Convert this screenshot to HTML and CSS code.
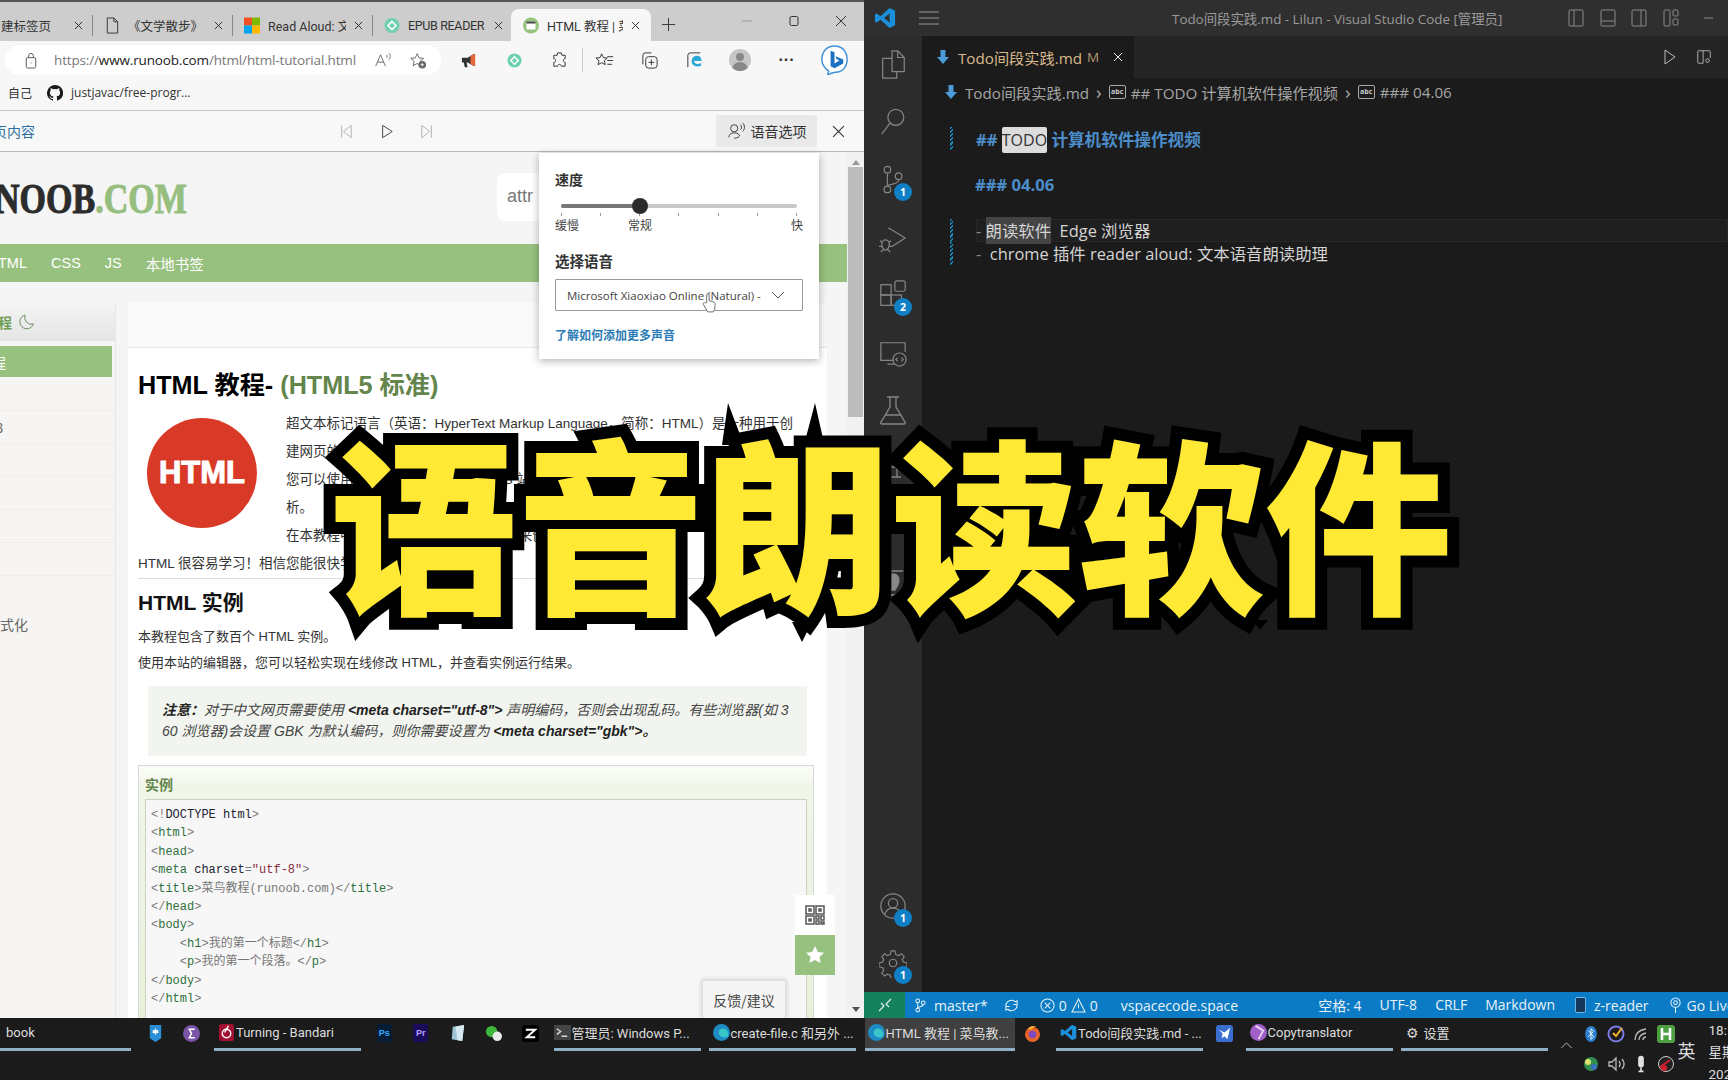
FILE: index.html
```html
<!DOCTYPE html>
<html lang="zh">
<head>
<meta charset="utf-8">
<title>语音朗读软件</title>
<link rel="stylesheet" href="styles.css">
</head>
<body>
<div class="screen">
  <div class="panes">
    <section class="browser">
      <div class="tabstrip">
        <div class="tab tab-first"><span class="tab-label">建标签页</span><svg class="x" viewBox="0 0 10 10"><path d="M1 1l8 8M9 1l-8 8"/></svg></div>
        <div class="tab"><svg class="fav" viewBox="0 0 16 18"><path d="M3 1h7l4 4v12H3zM10 1v4h4" fill="none" stroke="#333"/></svg><span class="tab-label">《文学散步》</span><svg class="x" viewBox="0 0 10 10"><path d="M1 1l8 8M9 1l-8 8"/></svg></div>
        <div class="tab"><svg class="fav" viewBox="0 0 16 16"><rect width="8" height="8" fill="#f25022"/><rect x="8" width="8" height="8" fill="#7fba00"/><rect y="8" width="8" height="8" fill="#00a4ef"/><rect x="8" y="8" width="8" height="8" fill="#ffb900"/></svg><span class="tab-label">Read Aloud: 文</span><svg class="x" viewBox="0 0 10 10"><path d="M1 1l8 8M9 1l-8 8"/></svg></div>
        <div class="tab"><svg class="fav" viewBox="0 0 16 16"><circle cx="8" cy="8" r="7.5" fill="#6dd0b0"/><path d="M8 4l4 4-4 4-4-4z" fill="none" stroke="#fff" stroke-width="1.6"/></svg><span class="tab-label tab-tight">EPUB READER</span><svg class="x" viewBox="0 0 10 10"><path d="M1 1l8 8M9 1l-8 8"/></svg></div>
        <div class="tab tab-active"><svg class="fav" viewBox="0 0 16 16"><circle cx="8" cy="8" r="8" fill="#96c47e"/><rect x="3.5" y="4" width="9" height="8" rx="1" fill="#fff"/><rect x="3.5" y="4" width="9" height="2" fill="#444"/></svg><span class="tab-label">HTML 教程 | 菜</span><svg class="x" viewBox="0 0 10 10"><path d="M1 1l8 8M9 1l-8 8"/></svg></div>
        <svg class="newtab" viewBox="0 0 16 16"><path d="M8 1v14M1 8h14"/></svg>
        <div class="winctl">
          <svg viewBox="0 0 12 12"><path d="M1 6h10" stroke="#999"/></svg>
          <svg viewBox="0 0 12 12"><rect x="2" y="1.5" width="8" height="9" rx="1.5"/></svg>
          <svg viewBox="0 0 12 12"><path d="M1 1l10 10M11 1L1 11"/></svg>
        </div>
      </div>
      <div class="toolbar">
        <div class="urlbar">
          <svg class="lock" viewBox="0 0 14 18"><rect x="2" y="6" width="10" height="11" rx="1.5"/><path d="M4.5 6V4a2.5 2.5 0 015 0v2M7 11v1"/></svg>
          <span class="url"><span class="url-dim">https://</span>www.runoob.com<span class="url-dim">/html/html-tutorial.html</span></span>
          <svg class="url-ico" viewBox="0 0 22 20"><path d="M2 17L8 3l6 14M4 12h8M15 3c1.500 1 1.500 3 0 4M18 1c2.500 2 2.500 6 0 8"/></svg>
          <svg class="url-ico star" viewBox="0 0 20 20"><path d="M9 2l2.200 5 5.300.5-4 3.500 1.200 5.300L9 13.500 4.300 16.300 5.500 11l-4-3.500 5.300-.5z"/><circle cx="15" cy="15" r="4.500" fill="#666" stroke="none"/><path d="M15 13v4M13 15h4" stroke="#fff"/></svg>
        </div>
        <div class="tools">
          <span class="tool"><svg viewBox="0 0 20 20"><path d="M2 7h6l7-4v13l-7-4H7l1 5H5L4 12H2z" fill="#333" stroke="none"/><path d="M11 5l5-2v13l-5-2z" fill="#e2683c" stroke="none"/></svg></span>
          <span class="tool tool-small"><svg viewBox="0 0 16 16"><circle cx="8" cy="8" r="7.500" fill="#6dd0b0" stroke="none"/><path d="M8 4l4 4-4 4-4-4z" stroke="#fff" stroke-width="1.600"/></svg></span>
          <span class="tool"><svg viewBox="0 0 18 20"><path d="M7 2h4l.5 2.500H15V8c-2.500 0-2.500 4 0 4v4h-4c0-2.500-4-2.500-4 0H3v-4C5.500 12 5.500 8 3 8V4.500h3.500z"/></svg></span>
          <span class="sep"></span>
          <span class="tool"><svg viewBox="0 0 20 20"><path d="M7 3l1.800 4 4.200.4-3.200 2.800 1 4.200L7 12.300 3.200 14.400l1-4.200L1 7.400l4.200-.4zM13 6h6M13 10h6M13 14h5"/></svg></span>
          <span class="tool"><svg viewBox="0 0 20 20"><rect x="6" y="6" width="12" height="12" rx="3"/><path d="M3 14V4.500A2.500 2.500 0 015.500 2H12M12 9v6M9 12h6"/></svg></span>
          <span class="tool"><svg viewBox="0 0 20 20"><path d="M3 17V4.500A2.500 2.500 0 015.500 2H16"/><path d="M7 11c0-4 2.500-6 5.500-6s5 2 5 5.500H9.500c.5 3.500 4.500 4 7.500 2v3c-4 2-10 .5-10-4.500z" fill="#2fa8d6" stroke="none"/></svg></span>
          <span class="tool"><span class="avatar"><span class="avatar-head"></span><span class="avatar-body"></span></span></span>
          <span class="tool tool-dots">···</span>
          <span class="tool tool-bing"><svg class="bing" viewBox="0 0 30 34"><path d="M15 2c8 0 13 6 13 14s-5 13-12 13c-3 0-5 1-8 3l1-4C5 25 2 21 2 16 2 8 7 2 15 2z" fill="#fff" stroke="#3f8fd6" stroke-width="1.500"/><path d="M11 7l4 1.500V20l5-3-3-1.500-1-3 8 3.500v4l-9 5-4-2z" fill="#1b72c4" stroke="none"/></svg></span>
        </div>
      </div>
      <div class="favbar">
        <span class="fav-folder">自己</span>
        <svg class="gh" viewBox="0 0 16 16"><path d="M8 0a8 8 0 00-2.530 15.590c.4.070.55-.17.55-.38v-1.340c-2.230.49-2.700-1.070-2.700-1.070-.36-.93-.89-1.170-.89-1.170-.73-.5.050-.49.050-.49.800.060 1.230.830 1.230.830.710 1.220 1.870.870 2.330.660.070-.520.280-.870.500-1.070-1.780-.200-3.640-.890-3.640-3.950 0-.870.310-1.590.820-2.150-.080-.200-.360-1.020.080-2.120 0 0 .670-.210 2.200.820a7.600 7.600 0 014 0c1.530-1.040 2.200-.820 2.200-.820.440 1.100.160 1.920.080 2.120.510.560.820 1.270.820 2.150 0 3.070-1.870 3.750-3.650 3.950.290.250.540.730.540 1.480v2.200c0 .210.150.460.550.380A8 8 0 008 0z"/></svg>
        <span class="fav-link">justjavac/free-progr...</span>
      </div>
      <div class="readbar">
        <span class="read-title">页内容</span>
        <div class="read-controls">
          <svg viewBox="0 0 16 18"><path d="M3 2v14M14 2L5 9l9 7z"/></svg>
          <svg class="play" viewBox="0 0 16 18"><path d="M3 2l11 7-11 7z"/></svg>
          <svg viewBox="0 0 16 18"><path d="M13 2v14M2 2l9 7-9 7z"/></svg>
        </div>
        <div class="voice-btn">
          <svg viewBox="0 0 20 20"><circle cx="8" cy="7" r="4"/><path d="M2 17c0-3 2.500-5 6-5s6 2 6 3-2 3-6 3M15 3c1.500 1.500 1.500 4 0 5.500M17.500 1c2.500 2.500 2.500 7 0 9.500"/></svg>
          语音选项
        </div>
        <svg class="read-close" viewBox="0 0 12 12"><path d="M1 1l10 10M11 1L1 11"/></svg>
      </div>
      <div class="viewport">
        <div class="page">
          <header class="site-head">
            <span class="logo">NOOB<span class="logo-green">.COM</span></span>
            <div class="search">attr</div>
          </header>
          <nav class="site-nav">
            <span class="nav-clip">TML</span><span>CSS</span><span>JS</span><span>本地书签</span>
          </nav>
          <div class="site-body">
            <aside class="side">
              <div class="side-head"><span>程</span><svg viewBox="0 0 16 16"><path d="M6 1a7 7 0 108.500 9A7 7 0 016 1z"/></svg></div>
              <div class="side-active">程</div>
              <div class="side-item"></div>
              <div class="side-item">3</div>
              <div class="side-item"></div>
              <div class="side-item"></div>
              <div class="side-item"></div>
              <div class="side-item"></div>
              <div class="side-item side-clip">式化</div>
            </aside>
            <article class="article">
              <div class="article-band"></div>
              <div class="article-main">
                <h1 class="doc-title">HTML 教程- <span class="doc-green">(HTML5 标准)</span></h1>
                <div class="intro">
                  <div class="html-logo">HTML</div>
                  <div class="intro-text">
                    <p>超文本标记语言（英语：HyperText Markup Language，简称：HTML）是一种用于创</p>
                    <p>建网页的标准标记语言。</p>
                    <p>您可以使用 HTML 来建立自己的 WEB 站点，HTML 运行在浏览器上，由浏览器来解</p>
                    <p>析。</p>
                    <p>在本教程中，您将学习如何使用 HTML 来创建站点。</p>
                  </div>
                </div>
                <p class="easy">HTML 很容易学习！相信您能很快学会它！</p>
                <h2 class="doc-sub">HTML 实例</h2>
                <p class="body-line">本教程包含了数百个 HTML 实例。</p>
                <p class="body-line">使用本站的编辑器，您可以轻松实现在线修改 HTML，并查看实例运行结果。</p>
                <div class="note">
                  <b>注意：</b>对于中文网页需要使用 <b>&lt;meta charset="utf-8"&gt;</b> 声明编码，否则会出现乱码。有些浏览器(如 3<br>
                  60 浏览器)会设置 GBK 为默认编码，则你需要设置为 <b>&lt;meta charset="gbk"&gt;。</b>
                </div>
                <div class="example">
                  <h3 class="ex-title">实例</h3>
                  <pre class="code"><span class="c-p">&lt;!</span><span class="c-d">DOCTYPE html</span><span class="c-p">&gt;</span>
<span class="c-p">&lt;</span><span class="c-t">html</span><span class="c-p">&gt;</span>
<span class="c-p">&lt;</span><span class="c-t">head</span><span class="c-p">&gt;</span>
<span class="c-p">&lt;</span><span class="c-t">meta</span> <span class="c-d">charset</span><span class="c-p">=</span><span class="c-s">"utf-8"</span><span class="c-p">&gt;</span>
<span class="c-p">&lt;</span><span class="c-t">title</span><span class="c-p">&gt;</span><span class="c-x">菜鸟教程(runoob.com)</span><span class="c-p">&lt;/</span><span class="c-t">title</span><span class="c-p">&gt;</span>
<span class="c-p">&lt;/</span><span class="c-t">head</span><span class="c-p">&gt;</span>
<span class="c-p">&lt;</span><span class="c-t">body</span><span class="c-p">&gt;</span>
    <span class="c-p">&lt;</span><span class="c-t">h1</span><span class="c-p">&gt;</span><span class="c-x">我的第一个标题</span><span class="c-p">&lt;/</span><span class="c-t">h1</span><span class="c-p">&gt;</span>
    <span class="c-p">&lt;</span><span class="c-t">p</span><span class="c-p">&gt;</span><span class="c-x">我的第一个段落。</span><span class="c-p">&lt;/</span><span class="c-t">p</span><span class="c-p">&gt;</span>
<span class="c-p">&lt;/</span><span class="c-t">body</span><span class="c-p">&gt;</span>
<span class="c-p">&lt;/</span><span class="c-t">html</span><span class="c-p">&gt;</span></pre>
                </div>
              </div>
            </article>
          </div>
        </div>
        <div class="scrollbar">
          <span class="sb-up"></span>
          <span class="sb-thumb"></span>
          <span class="sb-down"></span>
        </div>
        <div class="voice-pop">
          <div class="vp-label">速度</div>
          <div class="slider"><span class="slider-fill"></span><span class="slider-thumb"></span></div>
          <div class="ticks"><i></i><i></i><i></i><i></i><i></i><i></i><i></i></div>
          <div class="speed-labels"><span>缓慢</span><span class="sl-mid">常规</span><span class="sl-end">快</span></div>
          <div class="vp-label vp-voice">选择语音</div>
          <div class="vp-select"><span>Microsoft Xiaoxiao Online (Natural) -</span><svg viewBox="0 0 14 8"><path d="M1 1l6 6 6-6"/></svg></div>
          <div class="vp-link">了解如何添加更多声音</div>
          <svg class="hand" viewBox="0 0 16 22"><path d="M5 11V3a1.300 1.300 0 012.600 0v6l5 1.500c1.500.5 1.500 2 1.400 3l-.5 5-1.500 2.500H6L1.500 13c-.8-1.500 1-2.500 2-1.500z"/></svg>
        </div>
        <div class="side-tools">
          <div class="st-qr"><svg viewBox="0 0 20 20"><path d="M1 1h8v8H1zM11 1h8v8h-8zM1 11h8v8H1zM4 4h2v2H4zM14 4h2v2h-2zM4 14h2v2H4zM11 11h3v3h-3zM16 11h3v4h-3zM11 16h3v3h-3zM16 17h3v2h-3z"/></svg></div>
          <div class="st-star"><svg viewBox="0 0 20 20"><path d="M10 1l2.800 6 6.200.7-4.600 4.200 1.300 6.100L10 15l-5.700 3 1.300-6.100L1 7.700 7.200 7z"/></svg></div>
        </div>
        <div class="feedback">反馈/建议</div>
      </div>
    </section>

    <section class="vscode">
      <div class="vs-title">
        <svg class="vs-logo" viewBox="0 0 24 24"><path d="M17 1l6 3v16l-6 3L7 14l-4 3-2-1V8l2-1 4 3zM17 7l-6 5 6 5z" fill="#1b8fd9"/></svg>
        <svg class="vs-burger" viewBox="0 0 20 14"><path d="M0 1h20M0 7h20M0 13h20"/></svg>
        <span class="vs-titletext">Todo间段实践.md - Lilun - Visual Studio Code [管理员]</span>
        <div class="vs-layout">
          <svg viewBox="0 0 16 18"><rect x="1" y="1" width="14" height="16" rx="1"/><path d="M6 1v16"/></svg>
          <svg viewBox="0 0 16 18"><rect x="1" y="1" width="14" height="16" rx="1"/><path d="M1 12h14"/></svg>
          <svg viewBox="0 0 16 18"><rect x="1" y="1" width="14" height="16" rx="1"/><path d="M10 1v16"/></svg>
          <svg viewBox="0 0 16 18"><rect x="1" y="1" width="6" height="16" rx="1"/><rect x="10" y="1" width="5" height="6" rx="1"/><rect x="10" y="10" width="5" height="6" rx="1"/></svg>
          <svg class="vs-min" viewBox="0 0 16 18"><path d="M3 9h9"/></svg>
        </div>
      </div>
      <div class="vs-middle">
        <aside class="activity">
          <div class="act-group">
            <span class="act"><svg viewBox="0 0 28 32"><path d="M13 1h6l7 7v15H13zM19 1v7h7M13 9H3v21h15v-7"/></svg></span>
            <span class="act"><svg viewBox="0 0 28 32"><circle cx="17" cy="11" r="8.500"/><path d="M11 17L2 29"/></svg></span>
            <span class="act"><svg viewBox="0 0 28 32"><circle cx="8" cy="5" r="3.500"/><circle cx="8" cy="26" r="3.500"/><circle cx="20" cy="12" r="3.500"/><path d="M8 9v13M20 16c0 5-10 4-12 6"/></svg><b class="badge">1</b></span>
            <span class="act"><svg viewBox="0 0 30 32"><path d="M10 5l18 11-14 9M3 23c0-3 2-5 4-5s4 2 4 5-2 6-4 6-4-3-4-6zM1 19l3 2M13 19l-3 2M0 25h3M11 25h3M2 31l3-3M12 31l-3-3"/></svg></span>
            <span class="act"><svg viewBox="0 0 28 32"><rect x="1" y="5" width="11" height="11"/><rect x="1" y="16" width="11" height="11"/><rect x="12" y="16" width="11" height="11"/><rect x="16" y="1" width="11" height="11" rx="2"/></svg><b class="badge">2</b></span>
            <span class="act"><svg viewBox="0 0 30 30"><path d="M16 23H2V4h26v10M9 27h8"/><circle cx="22" cy="22" r="7"/><path d="M20 20l-2 2 2 2M24 20l2 2-2 2"/></svg></span>
            <span class="act"><svg viewBox="0 0 28 30"><path d="M8 2h12M11 2v10L2 27c-1 1 0 2 1 2h22c1 0 2-1 1-2l-9-15V2M6 20h16"/></svg></span>
            <span class="act"><svg viewBox="0 0 28 30"><path d="M6 3l8 8 8-8M3 14h22M10 14v10M18 14v10M6 24h16"/></svg></span>
            <span class="act"></span>
            <span class="act"><svg viewBox="0 0 28 30"><path d="M4 3h20M4 27h20" /><path d="M14 6c4 0 6 3 6 7s-3 7-4 9h-4c-1-2-4-5-4-9s2-7 6-7z" fill="#888"/></svg></span>
          </div>
          <div class="act-group">
            <span class="act"><svg viewBox="0 0 30 30"><circle cx="15" cy="15" r="13"/><circle cx="15" cy="12" r="5"/><path d="M6 24c2-5 5-7 9-7s7 2 9 7"/></svg><b class="badge">1</b></span>
            <span class="act"><svg viewBox="0 0 30 30"><path d="M13 2h4l1 4 3 1 3-2 3 3-2 3 1 3 4 1v4l-4 1-1 3 2 3-3 3-3-2-3 1-1 4h-4l-1-4-3-1-3 2-3-3 2-3-1-3-4-1v-4l4-1 1-3-2-3 3-3 3 2 3-1z"/><circle cx="15" cy="15" r="4"/></svg><b class="badge">1</b></span>
          </div>
        </aside>
        <div class="editor">
          <div class="ed-tabs">
            <div class="ed-tab">
              <svg class="md-arrow" viewBox="0 0 12 16"><path d="M3.500 1h5v7H12l-6 7-6-7h3.500z"/></svg>
              <span class="ed-tabname">Todo间段实践.md</span><span class="ed-m">M</span>
              <svg class="ed-x" viewBox="0 0 10 10"><path d="M1 1l8 8M9 1l-8 8"/></svg>
            </div>
            <div class="ed-actions">
              <svg viewBox="0 0 14 18"><path d="M2 2l10 7-10 7z"/></svg>
              <svg viewBox="0 0 18 18"><path d="M8 16H3a1 1 0 01-1-1V3a1 1 0 011-1h12a1 1 0 011 1v7M8 2v14"/><circle cx="13" cy="13" r="2"/></svg>
            </div>
          </div>
          <div class="crumbs">
            <svg class="md-arrow" viewBox="0 0 12 16"><path d="M3.500 1h5v7H12l-6 7-6-7h3.500z"/></svg>
            <span>Todo间段实践.md</span><i>›</i>
            <em class="abc">abc</em><span>## TODO 计算机软件操作视频</span><i>›</i>
            <em class="abc">abc</em><span>### 04.06</span>
          </div>
          <div class="lines">
            <div class="line"><span class="git"></span><span class="h"><b>##</b> <mark class="word">TODO</mark> <b>计算机软件操作视频</b></span></div>
            <div class="line"><span class="nogit"></span></div>
            <div class="line"><span class="nogit"></span><span class="h"><b>### 04.06</b></span></div>
            <div class="line"><span class="nogit"></span></div>
            <div class="line line-cur"><span class="git"></span><span class="cur"><span class="dash">-</span> <mark class="sel">朗读软件</mark>  Edge 浏览器</span></div>
            <div class="line"><span class="git"></span><span class="cur"><span class="dash">-</span>  chrome 插件 reader aloud: 文本语音朗读助理</span></div>
          </div>
        </div>
      </div>
      <div class="status">
        <span class="st-remote"><svg viewBox="0 0 14 14"><path d="M1 13l5-5-3-3M13 1L8 6l3 3"/></svg></span>
        <span class="st-item st-branch"><svg viewBox="0 0 12 16"><circle cx="3" cy="3" r="2"/><circle cx="3" cy="13" r="2"/><circle cx="9" cy="5" r="2"/><path d="M3 5v6M9 7c0 3-6 2-6 4"/></svg>master*</span>
        <span class="st-item st-sync"><svg viewBox="0 0 16 16"><path d="M2 9a6 6 0 0110-5l2-1v4h-4M14 7a6 6 0 01-10 5l-2 1V9h4"/></svg></span>
        <span class="st-item st-err"><svg viewBox="0 0 16 16"><circle cx="8" cy="8" r="7"/><path d="M5 5l6 6M11 5l-6 6"/></svg>0<svg viewBox="0 0 16 16"><path d="M8 1l7 14H1z"/><path d="M8 6v5"/></svg>0</span>
        <span class="st-item st-live">vspacecode.space</span>
        <span class="st-right">
          <span>空格: 4</span><span>UTF-8</span><span>CRLF</span><span>Markdown</span>
          <span class="st-reader"><i class="phone"></i>z-reader</span>
          <span class="st-golive"><svg viewBox="0 0 14 18"><circle cx="7" cy="6" r="5"/><circle cx="7" cy="6" r="2"/><path d="M7 11v6"/></svg>Go Live</span>
        </span>
      </div>
    </section>
  </div>

  <footer class="taskbar">
    <div class="tb-app tb-book"><span class="tb-text">book</span></div>
    <span class="tb-icon tb-first"><svg viewBox="0 0 16 20"><path d="M2 1h12v14l-6 4-6-4z" fill="#2b8fd8"/><path d="M8 5v6M5 7l6 2M11 7L5 9" stroke="#fff" stroke-width="1.500"/></svg></span>
    <span class="tb-icon"><svg viewBox="0 0 16 16"><circle cx="8" cy="8" r="8" fill="#7a54a8"/><path d="M11 4H6l2 4-2 4h5" fill="none" stroke="#fff" stroke-width="1.500"/></svg></span>
    <div class="tb-app tb-turning"><svg class="tb-ico" viewBox="0 0 16 18"><rect width="16" height="18" rx="3" fill="#a01030"/><circle cx="8" cy="10" r="4.500" fill="none" stroke="#fff" stroke-width="1.500"/><path d="M10 2L6 9" stroke="#fff" stroke-width="1.500"/></svg><span class="tb-text">Turning - Bandari</span></div>
    <span class="tb-icon tb-ps"><span class="ps">Ps</span></span>
    <span class="tb-icon"><span class="pr">Pr</span></span>
    <span class="tb-icon"><svg viewBox="0 0 16 20"><path d="M3 3l12-2-2 17-11-2z" fill="#9fc4d8"/><path d="M6 3l9-2-2 17-5-1z" fill="#d7e8f0"/></svg></span>
    <span class="tb-icon"><svg viewBox="0 0 18 18"><circle cx="7" cy="7" r="6" fill="#3db83a"/><circle cx="13" cy="12" r="5" fill="#eaeaea"/></svg></span>
    <span class="tb-icon"><svg viewBox="0 0 18 18"><rect width="18" height="18" rx="3" fill="#000"/><path d="M4 5h10L5 13h9" fill="none" stroke="#fff" stroke-width="2"/></svg></span>
    <div class="tb-app tb-ps-win"><svg class="tb-ico" viewBox="0 0 18 16"><rect width="18" height="16" fill="#444"/><path d="M3 4l4 3-4 3M8 12h6" fill="none" stroke="#cfd8e0" stroke-width="1.500"/></svg><span class="tb-text">管理员: Windows P...</span></div>
    <div class="tb-app tb-gap"><svg class="tb-ico" viewBox="0 0 18 18"><circle cx="9" cy="9" r="9" fill="#1f8bc4"/><path d="M6 9c0-3 3-5 6-4 3 1 5 4 4 8-3 2-9 2-10-4z" fill="#38c6c9"/></svg><span class="tb-text">create-file.c 和另外 ...</span></div>
    <div class="tb-app tb-active tb-html"><svg class="tb-ico" viewBox="0 0 18 18"><circle cx="9" cy="9" r="9" fill="#1f8bc4"/><path d="M6 9c0-3 3-5 6-4 3 1 5 4 4 8-3 2-9 2-10-4z" fill="#38c6c9"/></svg><span class="tb-text">HTML 教程 | 菜鸟教...</span></div>
    <span class="tb-icon tb-ff"><svg viewBox="0 0 18 18"><circle cx="9" cy="10" r="8" fill="#e8632a"/><circle cx="9" cy="10" r="4" fill="#7a4cc0"/><path d="M4 4c2-3 6-4 9-2-3 0-5 2-5 3z" fill="#f8b23a"/></svg></span>
    <div class="tb-app tb-todo"><svg class="tb-ico" viewBox="0 0 24 24"><path d="M17 1l6 3v16l-6 3L7 14l-4 3-2-1V8l2-1 4 3zM17 7l-6 5 6 5z" fill="#1b8fd9"/></svg><span class="tb-text">Todo间段实践.md - ...</span></div>
    <span class="tb-icon tb-kite"><svg viewBox="0 0 18 18"><rect width="18" height="18" rx="3" fill="#3a6fd0"/><path d="M3 5l6 3 6-5-3 12-3-3-3 2 1-5z" fill="#fff"/></svg></span>
    <div class="tb-app tb-copy"><svg class="tb-ico" viewBox="0 0 18 18"><circle cx="9" cy="9" r="9" fill="#a060c8"/><path d="M6 2l8 5-5 9" fill="none" stroke="#e8d4f4" stroke-width="2"/></svg><span class="tb-text">Copytranslator</span></div>
    <div class="tb-app tb-set"><span class="tb-gear">⚙</span><span class="tb-text">设置</span></div>
    <svg class="tb-chev" viewBox="0 0 14 8"><path d="M1 7l6-6 6 6"/></svg>
    <div class="tray">
      <svg viewBox="0 0 16 20"><ellipse cx="8" cy="10" rx="6.500" ry="9" fill="#2a7fd0"/><path d="M5 6l6 7-3 3V4l3 3-6 6" fill="none" stroke="#fff"/></svg>
      <svg viewBox="0 0 18 18"><circle cx="9" cy="9" r="7.500" fill="none" stroke="#7a7ae0" stroke-width="2"/><path d="M6 8l3 3 6-8" fill="none" stroke="#f0b030" stroke-width="2"/></svg>
      <svg viewBox="0 0 18 18"><path d="M3 15c0-6 4-10 11-11M7 15c0-4 2-6 7-7M11 15c0-2 1-3 3-3" fill="none" stroke="#bbb" stroke-width="1.300"/></svg>
      <svg viewBox="0 0 18 18"><rect width="18" height="18" rx="3" fill="#4da040"/><path d="M5 3v12M13 3v12M5 9h8" stroke="#fff" stroke-width="2.500"/></svg>
      <svg viewBox="0 0 18 18"><circle cx="9" cy="9" r="7" fill="#2f8f4f"/><circle cx="6" cy="7" r="3" fill="#e0e070"/><circle cx="12" cy="12" r="3" fill="#3a70c0"/></svg>
      <svg viewBox="0 0 18 18"><path d="M2 7h3l4-4v12l-4-4H2zM12 6c1.500 2 1.500 4 0 6M15 4c2.500 3 2.500 7 0 10" fill="none" stroke="#bbb" stroke-width="1.300"/></svg>
      <svg viewBox="0 0 18 22"><rect x="5.500" y="1" width="7" height="14" rx="3.500" fill="#e0e0e0"/><path d="M9 15v5M6 20h6" stroke="#e0e0e0" stroke-width="2"/></svg>
      <svg viewBox="0 0 18 18"><circle cx="9" cy="9" r="7.500" fill="#222" stroke="#ccc"/><path d="M3 12l10-7" stroke="#d02030" stroke-width="2"/><circle cx="7" cy="13" r="3" fill="#d02030"/></svg>
    </div>
    <span class="tb-lang">英</span>
    <div class="tb-clock"><span>18:</span><span>星期</span><span>2023</span></div>
  </footer>

  <div class="headline-wrap">
    <svg class="spikes" viewBox="0 0 1728 1080"><path d="M722 445L728 403 744 445zM804 445L815 403 826 452zM792 622L802 642 812 622zM1252 620L1260 630 1268 620z"/></svg>
    <h1 class="headline">语音朗读软件</h1>
  </div>
</div>
</body>
</html>
```

FILE: styles.css
```css
* { box-sizing: border-box; }
html, body { margin: 0; padding: 0; height: 100%; background: #1b1b1b; overflow: hidden; }
body { font-family: "Liberation Sans", "Noto Sans CJK SC", sans-serif; }
svg { display: block; }
p, h1, h2, h3 { margin: 0; }

.screen { position: relative; width: 1728px; height: 1080px; overflow: hidden; display: flex; flex-direction: column; }
.panes { display: flex; height: 1018px; flex: none; }

/* ---------- browser ---------- */
.browser { width: 864px; flex: none; display: flex; flex-direction: column; background: #f7f7f7; position: relative; overflow: hidden; }

.tabstrip { height: 41px; flex: none; background: #cdcdcd; border-top: 2px solid #555; display: flex; align-items: flex-end; font: 12.500px Roboto, "Noto Sans CJK SC", sans-serif; color: #333; }
.tab { width: 140px; height: 32px; flex: none; display: flex; align-items: center; padding: 0 9px; gap: 8px; position: relative; }
.tab + .tab::before { content: ""; position: absolute; left: 0; top: 6px; bottom: 5px; width: 1px; background: #888; }
.tab-first { width: 92px; padding-left: 1px; }
.tab-label { flex: 1; overflow: hidden; white-space: nowrap; min-width: 0; }
.tab-tight { letter-spacing: -.35px; }
.tab .fav { width: 16px; height: 17px; flex: none; margin-left: 3px; }
.tab .x { width: 9px; height: 9px; flex: none; fill: none; stroke: #222; stroke-width: 1; }
.tab-active { background: #f7f7f7; border-radius: 8px 8px 0 0; margin-left: -1px; }
.tab-active::before { display: none; }
.tab-active .x { margin-right: 2px; }
.newtab { width: 15px; height: 15px; margin: 0 0 9px 10px; fill: none; stroke: #333; stroke-width: 1; flex: none; }
.winctl { margin-left: auto; display: flex; gap: 35px; padding: 0 17px 14px 0; align-self: flex-end; }
.winctl svg { width: 12px; height: 12px; fill: none; stroke: #333; stroke-width: 1; }

.toolbar { height: 34px; flex: none; display: flex; align-items: center; padding: 4px 0 0 5px; background: #f7f7f7; }
.urlbar { width: 436px; height: 30px; flex: none; background: #fff; border-radius: 15px; display: flex; align-items: center; padding-left: 19px; font: 13.500px "Open Sans", sans-serif; color: #222; }
.lock { width: 14px; height: 17px; fill: none; stroke: #555; stroke-width: 1; flex: none; margin-right: 16px; }
.url { white-space: nowrap; width: 310px; overflow: hidden; letter-spacing: -.15px; }
.url-dim { color: #777; }
.url-ico { width: 18px; height: 17px; margin-left: 10px; fill: none; stroke: #555; stroke-width: 1; flex: none; }
.url-ico.star { margin-left: 17px; }
.tools { display: flex; align-items: center; margin-left: 6px; }
.tool { width: 45px; height: 32px; flex: none; display: flex; align-items: center; justify-content: center; }
.tool svg { width: 19px; height: 19px; fill: none; stroke: #333; stroke-width: 1; }
.tool-small svg { width: 15px; height: 15px; }
.tool svg.bing { width: 31px; height: 33px; }
.tool-bing { margin-left: 3px; }
.tool-dots { font-size: 16px; font-weight: bold; letter-spacing: 0; color: #333; margin-left: 2px; }
.sep { width: 1px; height: 24px; background: #ccc; margin: 0 -.5px; flex: none; }
.avatar { width: 22px; height: 22px; border-radius: 50%; background: #c5c5c5; position: relative; overflow: hidden; display: block; }
.avatar-head { position: absolute; left: 7px; top: 4px; width: 8px; height: 8px; border-radius: 50%; background: #888; }
.avatar-body { position: absolute; left: 3px; top: 13px; width: 16px; height: 10px; border-radius: 8px 8px 0 0; background: #888; }

.favbar { height: 36px; flex: none; display: flex; align-items: center; padding-left: 8px; border-bottom: 1px solid #c9c9c9; font: 12px "Open Sans", "Noto Sans CJK SC", sans-serif; color: #333; background: #f7f7f7; }
.fav-folder { width: 39px; }
.gh { width: 16px; height: 16px; fill: #1a1a1a; margin-right: 8px; }

.readbar { height: 41px; flex: none; display: flex; align-items: center; border-bottom: 1px solid #bbb; background: #f8f8f8; }
.read-title { margin-left: -7px; width: 333px; font: 14px "Noto Sans CJK SC", sans-serif; color: #2b6f9e; flex: none; }
.read-controls { display: flex; gap: 26.500px; flex: none; margin-left: 13px; }
.read-controls svg { width: 14px; height: 17px; fill: none; stroke: #aaa; stroke-width: 1; }
.read-controls svg.play { stroke: #333; }
.voice-btn { margin-left: 282px; width: 101px; height: 32px; background: #e9e9e9; border-radius: 2px; display: flex; align-items: center; justify-content: center; gap: 6px; font: 14px "Noto Sans CJK SC", sans-serif; color: #333; flex: none; }
.voice-btn svg { width: 18px; height: 18px; fill: none; stroke: #333; stroke-width: 1; }
.read-close { width: 13px; height: 13px; margin-left: 15px; fill: none; stroke: #333; stroke-width: 1; flex: none; }

.viewport { flex: 1; min-height: 0; display: flex; position: relative; background: #f5f5f5; }
.page { width: 847px; flex: none; overflow: hidden; display: flex; flex-direction: column; }

.site-head { height: 92px; flex: none; display: flex; align-items: center; position: relative; }
.logo { font: 900 42px/1 "Liberation Serif", serif; color: #2c2c2c; margin-left: -5px; width: 502px; flex: none; transform: scaleX(.81); transform-origin: left center; -webkit-text-stroke: 1px currentColor; white-space: nowrap; padding-top: 2px; }
.logo-green { color: #96bf7f; }
.search { width: 180px; height: 48px; background: #fff; border-radius: 8px; margin-top: -3px; display: flex; align-items: center; padding-left: 10px; font-size: 18px; color: #777; flex: none; }

.site-nav { height: 38px; flex: none; background: #97c17e; display: flex; align-items: center; gap: 24px; color: #fff; font: 14.500px "Liberation Sans", "Noto Sans CJK SC", sans-serif; padding-left: 0; }
.nav-clip { margin-left: -2px; }

.site-body { flex: 1; min-height: 0; display: flex; padding-top: 21px; gap: 12px; }
.side { width: 116px; flex: none; background: #f6f5f3; border-right: 1px solid #e6e6e6; font: 14px "Noto Sans CJK SC", sans-serif; color: #555; }
.side-head { height: 38px; background: linear-gradient(#f4f4f4, #e5e5e5); display: flex; align-items: center; gap: 7px; color: #6e9e56; font-weight: 700; margin-bottom: 5px; }
.side-head span { margin-left: -2px; }
.side-head svg { width: 16px; height: 16px; fill: none; stroke: #6d8f62; stroke-width: 1; }
.side-active { height: 31px; width: 112px; background: #97c17e; color: #fff; display: flex; align-items: center; padding-left: 0; margin-bottom: 1px; text-indent: -8px; overflow: hidden; }
.side-item { height: 33px; border-bottom: 1px solid #eeedeb; display: flex; align-items: center; font-size: 13px; color: #666; text-indent: -4px; overflow: hidden; }
.side-clip { text-indent: 0; margin-top: 31px; border-bottom: 0; font-size: 14px; }

.article { width: 699px; flex: none; background: #fff; overflow: hidden; color: #333; }
.article-band { height: 45px; background: #fafafa; border-bottom: 1px solid #e9e9e9; }
.article-main { padding: 22px 13px 0 10px; }
.doc-title { font: 700 25.200px/30px "Liberation Sans", "Noto Sans CJK SC", sans-serif; color: #000; white-space: nowrap; }
.doc-green { color: #64854c; }
.intro { display: flex; height: 140px; margin-top: 10px; }
.html-logo { width: 110px; height: 110px; border-radius: 50%; background: #d93a27; margin: 8px 29px 0 9px; flex: none; color: #fff; font: 900 31px/110px "Liberation Sans", sans-serif; text-align: center; -webkit-text-stroke: 1px #fff; }
.intro-text { flex: 1; min-width: 0; font-size: 13.500px; line-height: 28px; white-space: nowrap; }
.easy { font-size: 13.500px; line-height: 28px; border-bottom: 1px solid #ddd; padding-bottom: 0; height: 29px; white-space: nowrap; margin-top: 0; }
.doc-sub { font: 700 21px/30px "Liberation Sans", "Noto Sans CJK SC", sans-serif; color: #111; margin-top: 9px; }
.body-line { font-size: 13px; line-height: 26px; white-space: nowrap; margin-top: 0; }
.doc-sub + .body-line { margin-top: 6px; }
.note { margin: 10px 7px 0 10px; height: 70px; background: #f2f5ef; padding: 14px 10px 0 14px; font-size: 14px; line-height: 21px; font-style: italic; white-space: nowrap; color: #444; }
.note b { color: #222; }
.example { margin-top: 9px; width: 676px; height: 260px; border: 1px solid #d6d6d6; background: linear-gradient(#fbfdf8, #f0f6e8 8%, #e8f0dc); padding: 0 6px; }
.ex-title { font: 700 14px/37px "Noto Sans CJK SC", sans-serif; color: #64854c; height: 33px; }
.code { margin: 0; height: 240px; background: #f7f7f7; border: 1px solid #c9d4bd; padding: 6px 5px; font: 12px/18.400px "Liberation Mono", "Noto Sans CJK SC", monospace; color: #555; overflow: hidden; }
.c-p { color: #777; }
.c-t { color: #2f7040; }
.c-d { color: #223; }
.c-s { color: #8a3040; }
.c-x { color: #777; }

.scrollbar { width: 17px; flex: none; background: #f1f1f1; display: flex; flex-direction: column; align-items: center; position: relative; }
.sb-up { width: 0; height: 0; border: 4px solid transparent; border-bottom: 5px solid #999; margin-top: 4px; }
.sb-thumb { width: 15px; height: 250px; background: #bcbcbc; margin-top: 2px; }
.sb-down { width: 0; height: 0; border: 4px solid transparent; border-top: 5px solid #505050; margin-top: auto; margin-bottom: 2px; }

.voice-pop { position: absolute; left: 539px; top: 1px; width: 280px; height: 206px; background: #fff; box-shadow: 0 2px 8px rgba(0,0,0,.3); padding: 16px 16px 0; color: #333; font-family: "Noto Sans CJK SC", sans-serif; }
.vp-label { font-size: 14px; font-weight: 700; line-height: 20px; }
.slider { height: 4px; margin: 15px 6px 0; background: #c8c8c8; border-radius: 2px; position: relative; }
.slider-fill { position: absolute; left: 0; top: 0; height: 4px; width: 79px; background: #777; border-radius: 2px; }
.slider-thumb { position: absolute; left: 71px; top: -6px; width: 16px; height: 16px; border-radius: 50%; background: #2b2b2b; }
.ticks { display: flex; justify-content: space-between; margin: 5px 6px 0; height: 3px; }
.ticks i { width: 1px; height: 3px; background: #999; }
.speed-labels { display: flex; font-size: 12px; line-height: 16px; color: #444; margin-top: 1px; }
.sl-mid { margin-left: 49px; }
.sl-end { margin-left: auto; }
.vp-voice { font-size: 14.500px; margin-top: 18px; }
.vp-select { margin-top: 8px; height: 32px; border: 1px solid #999; border-radius: 1px; display: flex; align-items: center; justify-content: space-between; padding: 0 17px 0 11px; font: 11.500px "Open Sans", sans-serif; color: #444; white-space: nowrap; }
.vp-select svg { width: 14px; height: 8px; fill: none; stroke: #555; stroke-width: 1; }
.vp-link { margin-top: 15px; font-size: 12px; font-weight: 700; color: #2b7cb5; line-height: 18px; }
.hand { position: absolute; left: 163px; top: 139px; width: 15px; height: 21px; fill: #fff; stroke: #666; stroke-width: 1; }

.side-tools { position: absolute; left: 795px; bottom: 43px; width: 40px; }
.st-qr { height: 40px; background: #fff; display: flex; align-items: center; justify-content: center; }
.st-qr svg { width: 20px; height: 20px; fill: none; stroke: #555; stroke-width: 1.500; }
.st-star { height: 40px; background: #97c17e; display: flex; align-items: center; justify-content: center; }
.st-star svg { width: 20px; height: 20px; fill: #fff; }
.feedback { position: absolute; left: 702px; bottom: 0; width: 84px; height: 38px; background: #f5f5f5; border: 1px solid #ddd; border-bottom: 0; box-shadow: 0 0 6px rgba(0,0,0,.2); display: flex; align-items: center; justify-content: center; font: 14px "Noto Sans CJK SC", sans-serif; color: #444; }

/* ---------- vs code ---------- */
.vscode { width: 864px; flex: none; display: flex; flex-direction: column; background: #1e1e1e; overflow: hidden; font-family: "Open Sans", "Noto Sans CJK SC", sans-serif; color: #ccc; }
.vs-title { height: 36px; flex: none; display: flex; align-items: center; background: #2f2f2f; position: relative; }
.vs-logo { width: 22px; height: 22px; margin-left: 10px; flex: none; }
.vs-burger { width: 20px; height: 14px; margin-left: 23px; fill: none; stroke: #999; stroke-width: 1; flex: none; }
.vs-titletext { margin-left: 233px; font-size: 13.400px; color: #9a9a9a; white-space: nowrap; width: 352px; flex: none; }
.vs-layout { display: flex; gap: 15.500px; margin-left: 44px; align-items: center; flex: none; }
.vs-layout svg { width: 16px; height: 18px; fill: none; stroke: #8a8a8a; stroke-width: 1; }
.vs-layout .vs-min { margin-left: 7px; }

.vs-middle { flex: 1; min-height: 0; display: flex; }
.activity { width: 58px; flex: none; background: #2c2c2c; display: flex; flex-direction: column; justify-content: space-between; }
.act-group { display: flex; flex-direction: column; }
.act { height: 57.600px; display: flex; align-items: center; justify-content: center; position: relative; }
.act svg { width: 28px; height: 30px; fill: none; stroke: #858585; stroke-width: 1.300; }
.badge { position: absolute; left: 30px; top: 32px; width: 18px; height: 18px; border-radius: 50%; background: #0f7fc6; color: #fff; font: 700 10.500px/18px "Open Sans", sans-serif; text-align: center; }

.editor { flex: 1; min-width: 0; display: flex; flex-direction: column; background: #1b1b1b; }
.ed-tabs { height: 42px; flex: none; display: flex; background: #252526; }
.ed-tab { width: 212px; flex: none; background: #1b1b1b; display: flex; align-items: center; padding-left: 15px; font-size: 15.200px; }
.md-arrow { width: 12px; height: 16px; fill: #4a9bd8; flex: none; }
.ed-tabname { color: #d9b98c; margin-left: 9px; white-space: nowrap; }
.ed-m { color: #b3996f; margin-left: 5px; font-size: 13.500px; }
.ed-x { width: 10px; height: 10px; margin-left: 14px; fill: none; stroke: #eee; stroke-width: 1; flex: none; }
.ed-actions { margin-left: auto; display: flex; gap: 18px; align-items: center; padding-right: 16px; }
.ed-actions svg { width: 16px; height: 18px; fill: none; stroke: #bbb; stroke-width: 1; }

.crumbs { height: 28px; flex: none; display: flex; align-items: center; padding-left: 23px; gap: 5px; font-size: 15.200px; color: #a5a5a5; white-space: nowrap; }
.crumbs .md-arrow { margin-right: 3px; }
.crumbs i { font-style: normal; font-size: 19px; margin: 0 2px; }
.abc { font: 700 7px/12px "Open Sans", sans-serif; border: 1px solid #aaa; border-radius: 2px; width: 17px; height: 14px; text-align: center; color: #ccc; }

.lines { padding-top: 21px; font-size: 16.600px; }
.line { height: 23px; display: flex; align-items: center; white-space: pre; color: #d4d4d4; }
.git { width: 3px; height: 23px; margin: 0 23px 0 28px; background: repeating-linear-gradient(135deg, #1f86b0 0 1.500px, #123 1.500px 3px); flex: none; }
.nogit { width: 53px; flex: none; }
.h b { color: #4c8dc9; font-weight: 700; }
.word { background: #dcdcdc; color: #333; border-radius: 2px; padding: 2px 0; font-size: 16px; }
.sel { background: #444; color: #d4d4d4; padding: 2px 0; }
.line-cur { position: relative; }
.cur { display: block; flex: 1; height: 23px; line-height: 23px; font-size: 16.400px; }
.line-cur .cur { background: #1f1f1f; box-shadow: inset 0 0 0 1px #282828; }
.dash { color: #8a8a8a; }

.status { height: 26px; flex: none; display: flex; align-items: center; background: #0a7bc4; color: #e8f2f8; font-size: 14px; white-space: nowrap; overflow: hidden; }
.st-remote { width: 41px; height: 26px; flex: none; background: #16825d; display: flex; align-items: center; justify-content: center; }
.status svg { fill: none; stroke: #e8f2f8; stroke-width: 1.100; }
.st-remote svg { width: 14px; height: 14px; }
.st-item { display: flex; align-items: center; gap: 5px; flex: none; }
.st-item svg { width: 15px; height: 15px; }
.st-branch { margin-left: 10px; gap: 8px; }
.st-branch svg { width: 11px; height: 15px; }
.st-sync { margin-left: 16px; }
.st-err { margin-left: 21px; gap: 4px; }
.st-live { margin-left: 23px; }
.st-right { margin-left: 80px; display: flex; gap: 18px; flex: none; }
.st-reader { display: flex; align-items: center; gap: 8px; margin-left: 2px; }
.phone { display: block; width: 11px; height: 16px; background: #16375a; border: 1px solid #6fb6e2; border-radius: 2px; }
.st-golive { display: flex; align-items: center; gap: 5px; margin-left: 2px; }
.st-golive svg { width: 13px; height: 17px; }

/* ---------- taskbar ---------- */
.taskbar { height: 62px; flex: none; display: flex; align-items: flex-start; background: #1b1b1b; color: #ddd; font: 13px Roboto, "Noto Sans CJK SC", sans-serif; position: relative; }
.tb-app { width: 147px; height: 33px; flex: none; display: flex; align-items: center; gap: 1px; padding: 1px 0 2px 4px; border-bottom: 3px solid #8fb0c6; white-space: nowrap; overflow: hidden; }
.tb-ico { width: 17px; height: 17px; flex: none; }
.tb-book { width: 131px; padding-left: 6px; }
.tb-icon { width: 36.500px; height: 30px; flex: none; display: flex; align-items: center; justify-content: center; }
.tb-icon svg { width: 17px; height: 19px; }
.tb-first { margin-left: 6px; }
.tb-turning { margin-left: 4px; }
.tb-ps { margin-left: 5px; }
.tb-ps-win { margin-left: 5px; padding-left: 0; }
.tb-gap { margin-left: 8px; }
.ps, .pr { display: block; width: 15px; height: 18px; font: 700 9px/18px "Liberation Sans", sans-serif; text-align: center; border-radius: 2px; }
.ps { background: #071d36; color: #31a8ff; }
.pr { background: #1a0a5a; color: #b9a0ff; }
.tb-html { width: 150px; margin-left: 9px; background: #404040; padding-left: 3px; }
.tb-ff { margin-left: 0; }
.tb-todo { margin-left: 5px; }
.tb-kite { margin-left: 3px; }
.tb-copy { margin-left: 3px; }
.tb-set { margin-left: 8px; gap: 5px; padding-left: 5px; }
.tb-gear { font-size: 14px; }
.tb-chev { width: 13px; height: 7px; margin: 24px 0 0 12px; fill: none; stroke: #ccc; stroke-width: 1; flex: none; }
.tray { width: 98px; margin: 7px 0 0 9px; display: grid; grid-template-columns: repeat(4, 18px); gap: 12px 7px; flex: none; }
.tray svg { width: 18px; height: 18px; }
.tb-lang { font-size: 18px; margin-top: 19px; margin-left: -2px; flex: none; }
.tb-clock { display: flex; flex-direction: column; margin-left: 13px; font-size: 13.500px; line-height: 22px; white-space: nowrap; flex: none; padding-top: 1px; }

/* ---------- headline ---------- */
.headline-wrap { position: absolute; inset: 0; pointer-events: none; }
.spikes { position: absolute; inset: 0; width: 1728px; height: 1080px; fill: #000; }
.headline { position: absolute; left: 330px; top: 397px; font: 900 187px/1.300 "Noto Sans CJK SC", sans-serif; color: #ffe935; white-space: nowrap; -webkit-text-stroke: 24px #000; paint-order: stroke fill; margin: 0; }
```
